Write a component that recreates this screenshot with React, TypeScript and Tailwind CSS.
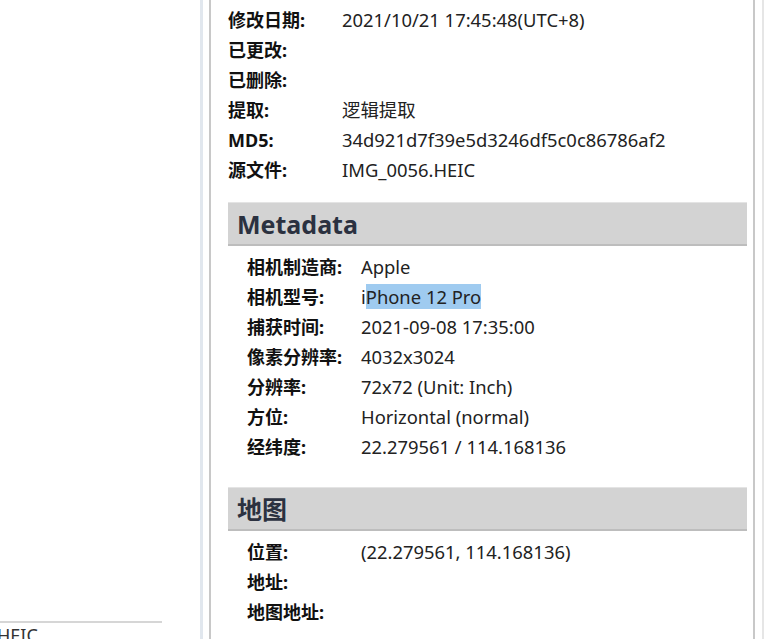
import React from "react";

const font = { fontFamily: '"Noto Sans", "Noto Sans CJK SC", sans-serif' };

function Row({ label, value, indent = false }: { label: string; value?: React.ReactNode; indent?: boolean }) {
  return (
    <div className={`flex h-[30px] items-center ${indent ? "pl-[19px]" : ""}`}>
      <div className="w-[114px] shrink-0 font-bold text-[18px] leading-[24px] text-[#111]">{label}</div>
      <div className="text-[18.4px] leading-[24px] text-[#222] whitespace-nowrap">{value}</div>
    </div>
  );
}

function Header({ title }: { title: string }) {
  return (
    <div className="h-[44px] bg-[#d3d3d3] border-t border-t-[#e4e4e4] border-b-2 border-b-[#bdbdbd] flex items-center pl-[9px]">
      <span className="text-[25px] font-bold text-[#2b3140] leading-[30px]">{title}</span>
    </div>
  );
}

export default function App() {
  return (
    <div className="w-[772px] h-[639px] overflow-hidden bg-white flex" style={font}>
      <div className="w-[200px] shrink-0 flex flex-col">
        <div className="h-[621px] shrink-0" />
        <div className="w-[162px] h-[2px] shrink-0 bg-[#d6d6d6]" />
        <div className="text-[18px] text-[#333] leading-[22px] -ml-[3px] mt-[1px] whitespace-nowrap">HEIC</div>
      </div>
      <div className="w-[3px] shrink-0 bg-[#e1e7ee]" />
      <div className="w-[6px] shrink-0 bg-white" />
      <div className="w-[2px] shrink-0 bg-[#c8c8c8]" />
      <div className="w-[542px] shrink-0 overflow-hidden bg-white pl-[17px] pr-[6px]">
        <div className="-mt-[25px]">
          <Row label="创建日期:" value="2021/10/21 17:45:48(UTC+8)" />
          <Row label="修改日期:" value="2021/10/21 17:45:48(UTC+8)" />
          <Row label="已更改:" />
          <Row label="已删除:" />
          <Row label="提取:" value="逻辑提取" />
          <Row label="MD5:" value="34d921d7f39e5d3246df5c0c86786af2" />
          <Row label="源文件:" value="IMG_0056.HEIC" />
        </div>
        <div className="mt-[17px]">
          <Header title="Metadata" />
        </div>
        <div className="mt-[6px]">
          <Row indent label="相机制造商:" value="Apple" />
          <Row
            indent
            label="相机型号:"
            value={
              <span>
                i<span className="bg-[#9fcbf0]">Phone 12 Pro</span>
              </span>
            }
          />
          <Row indent label="捕获时间:" value="2021-09-08 17:35:00" />
          <Row indent label="像素分辨率:" value="4032x3024" />
          <Row indent label="分辨率:" value="72x72 (Unit: Inch)" />
          <Row indent label="方位:" value="Horizontal (normal)" />
          <Row indent label="经纬度:" value="22.279561 / 114.168136" />
        </div>
        <div className="mt-[25px]">
          <Header title="地图" />
        </div>
        <div className="mt-[6px]">
          <Row indent label="位置:" value="(22.279561, 114.168136)" />
          <Row indent label="地址:" />
          <Row indent label="地图地址:" />
        </div>
      </div>
      <div className="w-[2px] shrink-0 bg-[#c8c8c8]" />
      <div className="w-[7px] shrink-0 bg-white" />
      <div className="w-[2px] shrink-0 bg-[#e6e6e6]" />
      <div className="flex-1 bg-white" />
    </div>
  );
}
